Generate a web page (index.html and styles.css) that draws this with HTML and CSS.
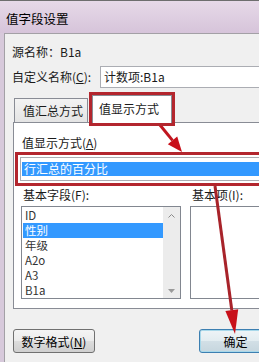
FILE: index.html
```html
<!DOCTYPE html>
<html lang="zh-CN">
<head>
    <meta charset="UTF-8">
    <meta name="viewport" content="width=device-width, initial-scale=1.0">
    <title>值字段设置</title>
    <link rel="stylesheet" href="styles.css">
</head>
<body>

<div class="window">
    <div class="titlebar">值字段设置</div>

    <div class="frame">
        <div class="client">
            <div class="src-row">源名称：B1a</div>

            <div class="name-row">
                <label class="name-label">自定义名称(<u>C</u>):</label>
                <div class="textbox">计数项:B1a</div>
            </div>

            <div class="tabbar">
                <div class="tab">值汇总方式</div>
                <div class="tab tab-active mark">值显示方式</div>
            </div>

            <div class="panel">
                <div class="field-label">值显示方式(<u>A</u>)</div>
                <div class="combo mark">
                    <div class="combo-value">行汇总的百分比</div>
                </div>

                <div class="lists">
                    <div class="field-label">基本字段(F):</div>
                    <div class="field-label">基本项(I):</div>

                    <div class="listbox">
                        <div class="list-items">
                            <div class="item">ID</div>
                            <div class="item item-selected">性别</div>
                            <div class="item">年级</div>
                            <div class="item">A2o</div>
                            <div class="item">A3</div>
                            <div class="item">B1a</div>
                        </div>
                        <div class="scrollbar">
                            <svg width="7" height="4" viewBox="0 0 7 4"><path d="M0.5 3.5 L3.5 0.5 L6.5 3.5" fill="none" stroke="#8a8a8a" stroke-width="1"/></svg>
                            <svg width="7" height="4" viewBox="0 0 7 4"><path d="M0 0 L7 0 L3.5 4 Z" fill="#9a9a9a"/></svg>
                        </div>
                    </div>
                    <div class="listbox"></div>
                </div>
            </div>

            <div class="buttons">
                <button class="btn">数字格式(<u>N</u>)</button>
                <button class="btn btn-default">确定</button>
            </div>
        </div>
    </div>

    <!-- red arrows drawn over the dialog -->
    <svg class="arrows" width="259" height="362" viewBox="0 0 259 362">
        <line x1="160" y1="125" x2="172.5" y2="140.4" stroke="#c0161f" stroke-width="3"/>
        <polygon points="182,152 167.8,144.2 177.2,136.6" fill="#c8101a"/>
        <line x1="215" y1="186" x2="231.8" y2="310.2" stroke="#a8232a" stroke-width="3"/>
        <polygon points="235,334 225.4,311.1 238.2,309.3" fill="#c8101a"/>
    </svg>
</div>

</body>
</html>
```

FILE: styles.css
```css
html, body {
    margin: 0;
    width: 259px;
    height: 362px;
    overflow: hidden;
    background-color: #f0f0f0;
}
body {
    font-family: "Noto Sans CJK SC", "Noto Sans", sans-serif;
    font-size: 12px;
    color: #1a1a1a;
}
.window {
    position: relative;
    width: 300px;
    height: 362px;
}
.titlebar {
    box-sizing: border-box;
    height: 33px;
    border-top: 1px solid #6e6e6e;
    background: linear-gradient(to bottom, #e6d9e8, #d6c4da);
    padding: 2px 0 0 6px;
    display: flex;
    align-items: center;
    font-size: 12.5px;
    color: #000;
}
.frame {
    display: flex;
    height: 329px;
    padding-left: 4px;
    background-color: #d7c9db; /* borde lavanda */
}
.client {
    flex: 1;
    background-color: #f0f0f0;
    border-left: 1px solid #a3a0a6;
    border-top: 1px solid #a3a0a6;
    padding-left: 7px;
}
.src-row {
    margin-top: 10px;
    line-height: 16px;
}
.name-row {
    display: flex;
    align-items: center;
    margin-top: 6px;
    height: 22px;
}
.name-label {
    width: 88px;
    line-height: 16px;
}
.textbox {
    box-sizing: border-box;
    flex: 1;
    height: 22px;
    border: 1px solid #abadb3;
    background-color: #fff;
    padding-left: 3px;
    line-height: 20px;
}
.tabbar {
    display: flex;
    align-items: flex-end;
    height: 27px;
    margin-top: 7px;
    padding-left: 2px;
}
.tab {
    box-sizing: border-box;
    width: 74px;
    height: 24px;
    border: 1px solid #898c95;
    border-bottom: none;
    background: linear-gradient(to bottom, #f3f3f3, #e4e4e4);
    padding: 5px 0 0 8px;
    line-height: 14px;
}
.tab-active {
    position: relative;
    z-index: 1;
    width: 80px;
    height: 28px;
    margin-left: 4px;
    margin-bottom: -1px;
    background: #fff;
    padding: 6px 0 0 6px;
}
.mark {
    outline: 3px solid #b3262e; /* recuadro rojo */
}
.tab-active.mark {
    outline-offset: 0;
}
.panel {
    box-sizing: border-box;
    height: 187px;
    margin-left: 1px;
    border: 1px solid #898c95;
    background-color: #fff;
    padding: 12px 0 0 6px;
}
.field-label {
    line-height: 16px;
    padding-left: 2px;
}
.combo {
    box-sizing: border-box;
    height: 24px;
    margin-top: 6px;
    border: 1px solid #abadb3;
    padding: 4px 0 0 1px;
    outline-offset: 2px;
}
.combo-value {
    height: 14px;
    line-height: 14px;
    background-color: #3399ff;
    color: #fff;
    padding-left: 2px;
}
.lists {
    display: grid;
    grid-template-columns: 160px 1fr;
    column-gap: 9px;
    row-gap: 3px;
    margin-top: 6px;
    margin-left: 1px;
}
.listbox {
    box-sizing: border-box;
    height: 93px;
    border: 1px solid #828790;
    background-color: #fff;
    display: flex;
    overflow: hidden;
}
.list-items {
    flex: 1;
    padding-top: 1px;
    color: #333;
    font-size: 11.5px;
}
.item {
    height: 15px;
    line-height: 15px;
    padding-left: 3px;
}
.item-selected {
    margin-left: 1px;
    padding-left: 2px;
    background-color: #3399ff;
    color: #fff;
}
.scrollbar {
    width: 17px;
    background-color: #ececec;
    display: flex;
    flex-direction: column;
    justify-content: space-between;
    align-items: center;
    padding: 7px 0 5px;
}
.buttons {
    display: flex;
    margin-top: 20px;
}
.btn {
    box-sizing: border-box;
    height: 24px;
    width: 82px;
    margin-left: 1px;
    border: 1px solid #707070;
    border-radius: 3px;
    background: linear-gradient(to bottom, #f4f4f4 0%, #ebebeb 50%, #dddddd 51%, #cfcfcf 100%);
    font-family: inherit;
    font-size: 12px;
    color: #000;
    padding: 0;
}
.btn-default {
    width: 73px;
    margin-left: 104px;
    border-color: #3c7fb1;
    box-shadow: inset 0 0 0 1px #a8d8ea;
    background: linear-gradient(to bottom, #eef4f7 0%, #e2ecf0 50%, #d2dfe6 51%, #c6d6de 100%);
}
.arrows {
    position: absolute;
    left: 0;
    top: 0;
    pointer-events: none;
}
```
